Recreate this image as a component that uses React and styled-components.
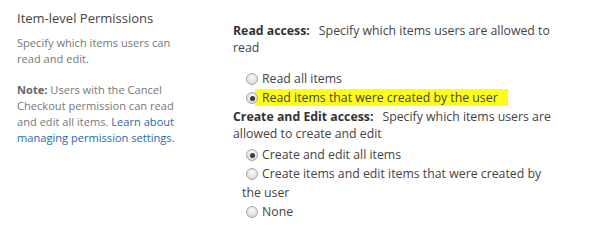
import React from 'react';
import styled, { createGlobalStyle } from 'styled-components';

const GlobalStyle = createGlobalStyle`
  body {
    margin: 0;
    background: #ffffff;
    font-family: "Open Sans", "Noto Sans", sans-serif;
  }
`;

const readOptions = [
  { label: 'Read all items', checked: false },
  { label: 'Read items that were created by the user', checked: true, marked: true },
];

const editOptions = [
  { label: 'Create and edit all items', checked: true },
  { label: 'Create items and edit items that were created by the user', checked: false },
  { label: 'None', checked: false },
];

const App = () => {
  return (
    <>
      <GlobalStyle />
      <Layout>
        <Side>
          <SideTitle>Item-level Permissions</SideTitle>
          <SideText>Specify which items users can read and edit.</SideText>
          <SideText $gap>
            <Strong>Note:</Strong> Users with the Cancel Checkout permission can read and edit all
            items. <Link href="#">Learn about managing permission settings.</Link>
          </SideText>
        </Side>
        <Main>
          <Question>
            <Label>Read access:</Label>Specify which items users are allowed to read
          </Question>
          <OptionList $top={13}>
            {readOptions.map((item) => (
              <Option key={item.label}>
                <Radio $checked={item.checked} />
                <OptionText $marked={item.marked}>{item.label}</OptionText>
              </Option>
            ))}
          </OptionList>
          <Question>
            <Label>Create and Edit access:</Label>Specify which items users are allowed to create
            and edit
          </Question>
          <OptionList $top={3}>
            {editOptions.map((item) => (
              <Option key={item.label}>
                <Radio $checked={item.checked} />
                <OptionText>{item.label}</OptionText>
              </Option>
            ))}
          </OptionList>
        </Main>
      </Layout>
    </>
  );
};

export default App;

const Layout = styled.div`
  display: flex;
  padding: 10px 0 0 17px;
`;

const Side = styled.div`
  width: 162px;
  margin-right: 54px;
`;

const SideTitle = styled.div`
  font-size: 13px;
  line-height: 17px;
  color: #444444;
  margin-bottom: 8px;
`;

const SideText = styled.p`
  margin: ${({ $gap }) => ($gap ? '14px 0 0' : '0')};
  font-size: 11.1px;
  line-height: 16.3px;
  color: #777777;
`;

const Strong = styled.b`
  color: #666666;
`;

const Link = styled.a`
  color: #2a6aa6;
  text-decoration: none;
`;

const Main = styled.div`
  width: 330px;
  padding-top: 13px;
`;

const Question = styled.div`
  font-size: 12.3px;
  line-height: 16.5px;
  color: #444444;
`;

const Label = styled.b`
  color: #333333;
  margin-right: 9px;
`;

const OptionList = styled.div`
  margin-top: ${({ $top }) => $top}px;
  margin-bottom: 2px;
  padding-left: 9px;
`;

const Option = styled.div`
  font-size: 12.3px;
  line-height: 19px;
  color: #444444;
`;

const Radio = styled.span`
  position: relative;
  z-index: 1;
  display: inline-block;
  width: 12px;
  height: 12px;
  margin: 0 4px 0 4px;
  vertical-align: -2px;
  box-sizing: border-box;
  border-radius: 50%;
  border: 1px solid #a8a8a8;
  background: radial-gradient(circle at 50% 35%, #fafafa 0%, #e4e4e4 55%, #cfcfcf 100%);

  &::after {
    content: '';
    display: ${({ $checked }) => ($checked ? 'block' : 'none')};
    position: absolute;
    left: 2.5px;
    top: 2.5px;
    width: 5px;
    height: 5px;
    border-radius: 50%;
    background: #3a3a3a;
  }
`;

const OptionText = styled.span`
  background: ${({ $marked }) => ($marked ? '#fdfc1a' : 'transparent')};
  box-shadow: ${({ $marked }) => ($marked ? '-7px 0 0 #fdfc1a' : 'none')};
  padding-right: ${({ $marked }) => ($marked ? '10px' : '0')};
`;
